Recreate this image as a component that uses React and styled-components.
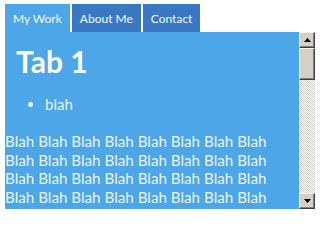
import React from 'react';
import styled, { createGlobalStyle } from 'styled-components';

const Global = createGlobalStyle`
	body {
		margin: 4px 5px;
		background: #fff;
		font-family: Lato, "Noto Sans", sans-serif;
	}
`;

const Tabs = styled.div`
	display: flex;
	gap: 2px;
	height: 28px;
`;

const Tab = styled.div`
	display: flex;
	align-items: center;
	padding: 0 8px;
	font-size: 12px;
	color: #f4f8fc;
	background: ${props => props.active ? '#4ca6e8' : '#3b78c4'};
`;

const Panel = styled.div`
	display: flex;
	height: 177px;
	background: #4ca6e8;
`;

const Content = styled.div`
	flex: 1;
	overflow: hidden;
	color: #eaf4fc;
`;

const Title = styled.h1`
	margin: 12px 0 0 11px;
	font-size: 30px;
	line-height: 34px;
	font-weight: bold;
	color: #fff;
`;

const List = styled.ul`
	margin: 17px 0 0 0;
	padding-left: 40px;
	font-size: 15px;
	line-height: 19px;
`;

const Text = styled.p`
	margin: 18px 0 0 0;
	font-size: 15.2px;
	line-height: 18.7px;
`;

const Scrollbar = styled.div`
	display: flex;
	flex-direction: column;
	width: 16px;
	background-color: #fff;
	background-image:
		linear-gradient(45deg, #d4d0c8 25%, transparent 25%, transparent 75%, #d4d0c8 75%),
		linear-gradient(45deg, #d4d0c8 25%, transparent 25%, transparent 75%, #d4d0c8 75%);
	background-size: 2px 2px;
	background-position: 0 0, 1px 1px;
`;

const Bevel = styled.div`
	box-sizing: border-box;
	height: ${props => props.h}px;
	background: #d4d0c8;
	border-top: 1px solid #f4f3f0;
	border-left: 1px solid #f4f3f0;
	border-right: 1px solid #404040;
	border-bottom: 1px solid #404040;
	box-shadow: inset -1px -1px 0 #808080;
	display: flex;
	align-items: center;
	justify-content: center;
`;

const Track = styled.div`
	flex: 1;
`;

const Arrow = ({ down }) => (
	<svg width="7" height="4" viewBox="0 0 7 4">
		{down ? <polygon points="0,0 7,0 3.5,4" fill="#000" /> : <polygon points="3.5,0 7,4 0,4" fill="#000" />}
	</svg>
);

const blah = Array(40).fill('Blah').join(' ');

const App = () => {
	return (
		<>
			<Global />
			<Tabs>
				<Tab active>My Work</Tab>
				<Tab>About Me</Tab>
				<Tab>Contact</Tab>
			</Tabs>
			<Panel>
				<Content>
					<Title>Tab 1</Title>
					<List>
						<li>blah</li>
					</List>
					<Text>{blah}</Text>
				</Content>
				<Scrollbar>
					<Bevel h={16}><Arrow /></Bevel>
					<Bevel h={32} />
					<Track />
					<Bevel h={16}><Arrow down /></Bevel>
				</Scrollbar>
			</Panel>
		</>
	);
};

export default App;
